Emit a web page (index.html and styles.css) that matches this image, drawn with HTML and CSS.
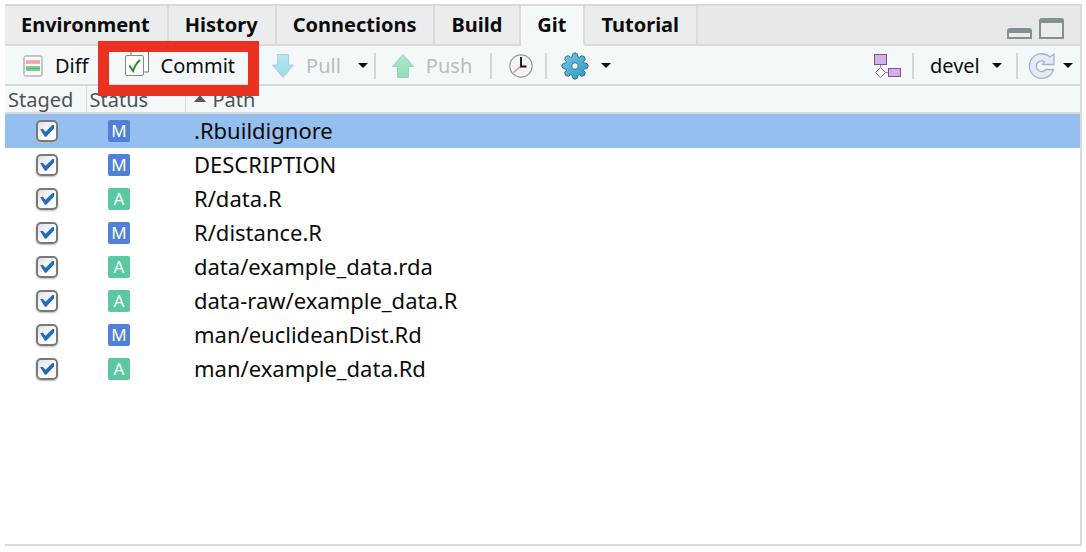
FILE: index.html
```html
<!DOCTYPE html>
<html lang="en">
<head>
    <meta charset="UTF-8">
    <meta name="viewport" content="width=device-width, initial-scale=1.0">
    <title>Git</title>
    <link rel="stylesheet" href="styles.css">
</head>
<body>
    <main class="pane">
        <div class="tabs">
            <div class="tab-list" role="tablist">
                <button class="tab" role="tab">Environment</button>
                <button class="tab" role="tab">History</button>
                <button class="tab" role="tab">Connections</button>
                <button class="tab" role="tab">Build</button>
                <button class="tab active" role="tab" aria-selected="true">Git</button>
                <button class="tab" role="tab">Tutorial</button>
            </div>
            <div class="window-buttons">
                <button class="minimize" aria-label="Minimize"></button>
                <button class="maximize" aria-label="Maximize"></button>
            </div>
        </div>

        <div class="toolbar">
            <button class="tool diff">
                <svg width="20" height="22" viewBox="0 0 20 22">
                    <rect x="1" y="1" width="18" height="20" rx="1.5" fill="#fbfbfb" stroke="#8f9396"/>
                    <rect x="3" y="5" width="14" height="4" fill="#f7b3b3"/>
                    <path d="M3 7h14" stroke="#ef9191" stroke-width="1"/>
                    <rect x="3" y="11" width="14" height="5" fill="#7ccf90"/>
                    <path d="M3 13.5h14" stroke="#52b66e" stroke-width="1"/>
                </svg>
                Diff
            </button>
            <button class="tool commit">
                <svg width="24" height="24" viewBox="0 0 24 24">
                    <path d="M6 -4h17.500v22H6z" fill="#fdfdfd" stroke="#74797c"/>
                    <rect x=".5" y="1.500" width="18" height="20" rx="1.500" fill="#fff" stroke="#85898c"/>
                    <path d="M4.500 11.500l3.500 5.500c1.500-4.500 3.500-8 7-11" fill="none" stroke="#2b8a25" stroke-width="2"/>
                </svg>
                Commit
                <span class="highlight"></span>
            </button>
            <button class="tool pull" disabled>
                <svg width="22" height="24" viewBox="0 0 22 24">
                    <defs>
                        <linearGradient id="pull" x2="0" y2="1"><stop stop-color="#b7e8ee"/><stop offset="1" stop-color="#9fd9e6"/></linearGradient>
                    </defs>
                    <path d="M5.500.5h11V11H21.500L11 23.500.5 11h5z" fill="url(#pull)" stroke="#a4d2dc"/>
                </svg>
                Pull
            </button>
            <button class="caret-button" aria-label="Pull options"><span class="caret"></span></button>
            <span class="separator"></span>
            <button class="tool push" disabled>
                <svg width="22" height="24" viewBox="0 0 22 24">
                    <defs>
                        <linearGradient id="push" x2="0" y2="1"><stop stop-color="#a9e8cf"/><stop offset="1" stop-color="#96dcb8"/></linearGradient>
                    </defs>
                    <path d="M5.500 23.500h11V12.500H21.500L11 .5.5 12.500h5z" fill="url(#push)" stroke="#98d4b8"/>
                </svg>
                Push
            </button>
            <span class="separator"></span>
            <button class="tool history" aria-label="History">
                <svg width="24" height="24" viewBox="0 0 24 24">
                    <circle cx="12" cy="12" r="11.200" fill="#ececec" stroke="#999" stroke-width="1.200"/>
                    <circle cx="12" cy="12" r="9.500" fill="#f4f4f4" stroke="#fff" stroke-width="1.200"/>
                    <path d="M11.500 12.500L4.500 18.500" stroke="#ee8b8b" stroke-width="1.500"/>
                    <path d="M12 3v9.500h5.500" fill="none" stroke="#111" stroke-width="1.800"/>
                </svg>
            </button>
            <span class="separator"></span>
            <button class="tool more" aria-label="More">
                <svg width="28" height="28" viewBox="-14 -14 28 28">
                    <defs>
                        <linearGradient id="gear" x2="1" y2="1"><stop stop-color="#72cdea"/><stop offset="1" stop-color="#2a93c4"/></linearGradient>
                    </defs>
                    <path fill="url(#gear)" stroke="#38728c" stroke-linejoin="round" d="M-3-9L-2.500-12Q0-14.500 2.500-12L3-9L4.300-8.500L6.500-10.300Q10.300-10.300 10.300-6.500L8.500-4.300L9-3L12-2.500Q14.500 0 12 2.500L9 3L8.500 4.300L10.300 6.500Q10.300 10.300 6.500 10.300L4.300 8.500L3 9L2.500 12Q0 14.500-2.500 12L-3 9L-4.300 8.500L-6.500 10.300Q-10.300 10.300-10.300 6.500L-8.500 4.300L-9 3L-12 2.500Q-14.500 0-12-2.500L-9-3L-8.500-4.300L-10.300-6.500Q-10.300-10.300-6.500-10.300L-4.300-8.500Z"/>
                    <circle r="3.300" fill="#f4f8f9" stroke="#38728c"/>
                </svg>
                <span class="caret"></span>
            </button>

            <div class="toolbar-right">
                <button class="tool" aria-label="New branch">
                    <svg width="28" height="24" viewBox="0 0 28 24">
                        <path d="M6.500 10v4M11 18.500h4" stroke="#a98abd"/>
                        <rect x=".5" y=".5" width="12" height="10" fill="#d3b1e4" stroke="#7f529d"/>
                        <path d="M6.500 13.500l5 5-5 5-5-5z" fill="#fff" stroke="#8a62a5"/>
                        <rect x="14.500" y="14.500" width="12" height="8" fill="#d3b1e4" stroke="#7f529d"/>
                    </svg>
                </button>
                <span class="separator"></span>
                <label class="branch">
                    <select aria-label="Branch">
                        <option>devel</option>
                    </select>
                    <span class="caret"></span>
                </label>
                <span class="separator"></span>
                <button class="tool refresh" aria-label="Refresh">
                    <svg width="26" height="28" viewBox="0 0 26 28">
                        <path d="M25 2V12.500H13.500L15.500 9.800A5.300 5.300 0 1 0 16.800 17.500H24.500A12.300 12.300 0 1 1 21 5z" fill="#e3ebf7" stroke="#a5b3c4" stroke-width="1.300" stroke-linejoin="round"/>
                    </svg>
                    <span class="caret"></span>
                </button>
            </div>
        </div>

        <table class="changes">
            <thead>
                <tr>
                    <th class="col-staged">Staged</th>
                    <th class="col-status">Status</th>
                    <th><span class="sort"></span>Path</th>
                </tr>
            </thead>
            <tbody>
                <tr class="selected">
                    <td><input type="checkbox" aria-labelledby="file1" checked></td>
                    <td><span class="badge modified">M</span></td>
                    <td id="file1">.Rbuildignore</td>
                </tr>
                <tr>
                    <td><input type="checkbox" aria-labelledby="file2" checked></td>
                    <td><span class="badge modified">M</span></td>
                    <td id="file2">DESCRIPTION</td>
                </tr>
                <tr>
                    <td><input type="checkbox" aria-labelledby="file3" checked></td>
                    <td><span class="badge added">A</span></td>
                    <td id="file3">R/data.R</td>
                </tr>
                <tr>
                    <td><input type="checkbox" aria-labelledby="file4" checked></td>
                    <td><span class="badge modified">M</span></td>
                    <td id="file4">R/distance.R</td>
                </tr>
                <tr>
                    <td><input type="checkbox" aria-labelledby="file5" checked></td>
                    <td><span class="badge added">A</span></td>
                    <td id="file5">data/example_data.rda</td>
                </tr>
                <tr>
                    <td><input type="checkbox" aria-labelledby="file6" checked></td>
                    <td><span class="badge added">A</span></td>
                    <td id="file6">data-raw/example_data.R</td>
                </tr>
                <tr>
                    <td><input type="checkbox" aria-labelledby="file7" checked></td>
                    <td><span class="badge modified">M</span></td>
                    <td id="file7">man/euclideanDist.Rd</td>
                </tr>
                <tr>
                    <td><input type="checkbox" aria-labelledby="file8" checked></td>
                    <td><span class="badge added">A</span></td>
                    <td id="file8">man/example_data.Rd</td>
                </tr>
            </tbody>
        </table>
    </main>
</body>
</html>
```
FILE: styles.css
```css
* {
    box-sizing: border-box;
}
body {
    margin: 0;
    padding: 4px 4px 6px 5px;
    height: 100vh;
    background-color: #fff;
    font-family: "Noto Sans", "Open Sans", sans-serif;
    font-size: 20px;
    color: #0c0c0c;
}
button, select {
    font: inherit;
    color: inherit;
    background: none;
    border: none;
    padding: 0;
}
svg {
    display: block;
    flex: none;
    overflow: visible;
}
.pane {
    height: 100%;
    border: 2px solid #d9dadc;
    border-left: none;
}

/* tabs */
.tabs {
    display: flex;
    justify-content: space-between;
    height: 40px;
    background-color: #e6e8ea;
    box-shadow: inset 0 -2px #d6dadc;
}
.tab-list {
    display: flex;
}
.tab {
    padding: 0 17px 1px 16px;
    font-weight: bold;
    background-color: #ebeced;
    border-right: 2px solid #d8dcde;
    border-bottom: 2px solid #d6dadc;
}
.tab.active {
    background-color: #f4f8f9;
    border-bottom-color: #f4f8f9;
}
.window-buttons {
    display: flex;
    align-items: flex-end;
    gap: 7px;
    padding: 0 16px 7px 0;
}
.window-buttons button {
    width: 25px;
    border: 2px solid #858e91;
    border-top-width: 5px;
    border-radius: 3px 3px 0 0;
    background-color: #e9ebec;
}
.minimize {
    height: 11px;
}
.maximize {
    height: 21px;
}

/* toolbar */
.toolbar {
    display: flex;
    align-items: center;
    height: 40px;
    padding: 1px 0 0 18px;
    background-color: #f4f8f9;
    border-bottom: 2px solid #d6dadc;
}
.tool {
    display: flex;
    align-items: center;
    gap: 12px;
}
.tool:disabled {
    color: #b9bdbf;
}
.commit {
    position: relative;
    margin: 0 37px 0 36px;
}
.highlight {
    position: absolute;
    inset: -11px -24px -17px -27px;
    border: 11px solid #ea3223;
}
.caret-button {
    margin: 0 6px 0 17px;
}
.caret {
    display: block;
    border: 5px solid transparent;
    border-top-color: #0c0c0c;
    border-bottom: none;
}
.separator {
    width: 2px;
    height: 26px;
    background-color: #d3d7d9;
}
.push {
    margin: 0 18px 0 16px;
}
.history {
    margin: 0 12px 0 17px;
}
.more {
    margin-left: 14px;
}
.toolbar-right {
    display: flex;
    align-items: center;
    margin-left: auto;
    padding-right: 7px;
}
.toolbar-right .tool {
    gap: 8px;
    margin-right: 10px;
}
.toolbar-right .refresh {
    margin: 0 0 0 11px;
}
.branch {
    display: flex;
    align-items: center;
    gap: 12px;
    margin: 0 14px 0 16px;
}
.branch select {
    appearance: none;
}

/* file list */
.changes {
    width: 100%;
    table-layout: fixed;
    border-collapse: collapse;
}
.changes th {
    height: 27px;
    padding: 0 0 0 3px;
    line-height: 25px;
    font-weight: normal;
    text-align: left;
    color: #4d5356;
    background-color: #f4f8f9;
    border-bottom: 2px solid #d6dadc;
}
.changes th + th {
    border-left: 1px solid #d6dadc;
}
.changes th:last-child {
    padding-left: 8px;
}
.changes .col-staged {
    width: 81px;
}
.changes .col-status {
    width: 99px;
}
.sort {
    display: inline-block;
    margin-right: 7px;
    border: 6px solid transparent;
    border-bottom: 7px solid #555c60;
    border-top: none;
    vertical-align: 5px;
}
.changes td {
    height: 34px;
    padding: 0 0 0 31px;
    font-size: 22px;
    line-height: 32px;
}
.changes td:nth-child(2) {
    padding-left: 22px;
}
.changes td:last-child {
    padding: 0 0 2px 9px;
}
.selected {
    background-color: #94bfee;
}
.changes input {
    appearance: none;
    display: block;
    width: 22px;
    height: 22px;
    margin: 0;
    border: 2px solid #77797b;
    border-radius: 5px;
    background: linear-gradient(135deg, #dfe0e4, #fff 60%);
    box-shadow: 0 1px 2px #bbb;
}
.changes input:checked::before {
    content: "";
    display: block;
    height: 18px;
    background-color: #246db5;
    clip-path: polygon(12% 40%, 26% 37%, 42% 54%, 80% 16%, 90% 16%, 88% 38%, 46% 82%, 38% 82%);
}
.badge {
    display: block;
    width: 22px;
    height: 22px;
    border-radius: 2px;
    font-size: 17px;
    line-height: 22px;
    text-align: center;
    color: #fff;
}
.modified {
    background-color: #5080d8;
}
.added {
    background-color: #5ac8a0;
}
```
